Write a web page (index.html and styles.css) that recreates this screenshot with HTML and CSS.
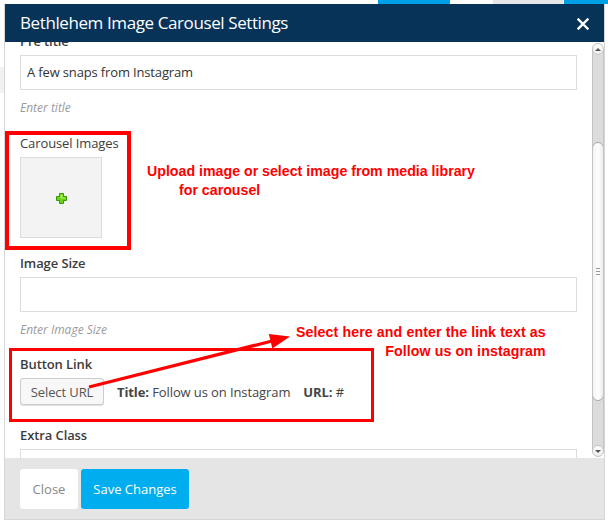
FILE: index.html
```html
<!DOCTYPE html>
<html>
<head>
<meta charset="utf-8">
<link rel="stylesheet" href="styles.css">
</head>
<body>
<div class="backdrop">
  <span class="bg-bar bg-blue1"></span>
  <span class="bg-bar bg-gray1"></span>
  <span class="bg-bar bg-blue2"></span>
  <span class="bg-side"></span>
</div>
<div class="modal">
  <div class="modal-header">
    <h1 class="modal-title">Bethlehem Image Carousel Settings</h1>
    <button class="modal-close" aria-label="Close">
      <svg width="12" height="12" viewBox="0 0 12 12"><path d="M1.5 1.5 L10.5 10.5 M10.5 1.5 L1.5 10.5" stroke="#fff" stroke-width="2.4" stroke-linecap="square"/></svg>
    </button>
  </div>
  <div class="modal-body">
    <div class="content">
      <div class="field">
        <label class="label">Pre title</label>
        <div class="input">A few snaps from Instagram</div>
        <div class="hint">Enter title</div>
      </div>
      <div class="field field-gap17 anchor">
        <label class="label label-normal">Carousel Images</label>
        <div class="img-box">
          <svg width="11" height="11" viewBox="0 0 11 11"><path d="M3.5 0.5 H7.5 V3.5 H10.5 V7.5 H7.5 V10.5 H3.5 V7.5 H0.5 V3.5 H3.5 Z" fill="#6fd11a" stroke="#2f9a06" stroke-width="1"/><path d="M4.5 1.5 H6.5 V4.5 H9.5 V5.5 H4.5 Z" fill="#a8ec5a"/></svg>
        </div>
        <span class="anno-box anno-box1"></span>
      </div>
      <div class="field field-gap16">
        <label class="label">Image Size</label>
        <div class="input"></div>
        <div class="hint">Enter Image Size</div>
      </div>
      <div class="field field-gap16 anchor">
        <label class="label">Button Link</label>
        <div class="link-row">
          <button class="btn-select">Select URL</button>
          <span class="meta"><b>Title:</b> Follow us on Instagram</span>
          <span class="meta"><b>URL:</b> #</span>
        </div>
        <span class="anno-box anno-box2"></span>
      </div>
      <div class="field field-gap21">
        <label class="label">Extra Class</label>
        <div class="input"></div>
      </div>
      <div class="anno-text anno-text1">
        <div>Upload image or select image from media library</div>
        <div class="indent">for carousel</div>
      </div>
      <div class="anno-text anno-text2">
        <div>Select here and enter the link text as</div>
        <div>Follow us on instagram</div>
      </div>
      <svg class="anno-arrow" width="608" height="523" viewBox="0 0 608 523">
        <line x1="89" y1="387" x2="274" y2="340.5" stroke="#ff0000" stroke-width="3.2"/>
        <polygon points="290,336.5 268.8,334 272.4,348.5" fill="#ff0000"/>
      </svg>
    </div>
    <div class="scrollbar">
      <div class="sb-btn sb-up"><span class="tri-up"></span></div>
      <div class="sb-track sb-track-top"></div>
      <div class="sb-thumb"><span class="grip"></span></div>
      <div class="sb-track sb-track-bottom"></div>
      <div class="sb-btn sb-down"><span class="tri-down"></span></div>
    </div>
  </div>
  <div class="modal-footer">
    <button class="btn btn-close">Close</button>
    <button class="btn btn-save">Save Changes</button>
  </div>
</div>
</body>
</html>
```

FILE: styles.css
```css
* { box-sizing: border-box; }
html, body { margin: 0; padding: 0; }
body {
  width: 608px;
  height: 523px;
  overflow: hidden;
  background: #fff;
  font-family: "Open Sans", "Noto Sans", sans-serif;
  color: #333;
  position: relative;
}
.backdrop { position: absolute; inset: 0; z-index: 0; }
.bg-bar { position: absolute; top: 0; height: 4px; }
.bg-blue1 { left: 378px; width: 72px; background: #00a0e6; }
.bg-gray1 { left: 493px; width: 70px; background: #e6e6e6; }
.bg-blue2 { left: 564px; width: 44px; background: #00a0e6; }
.bg-side { position: absolute; left: 0; top: 67px; width: 4px; height: 26px; background: #f1f1f1; }

.modal {
  position: relative;
  z-index: 1;
  margin: 4px 0 0 4px;
  width: 601px;
  border: 1px solid #d6d6d6;
  border-top: 0;
  background: #fff;
  display: flex;
  flex-direction: column;
}
.modal-header {
  height: 38px;
  background: #073358;
  display: flex;
  align-items: center;
  justify-content: space-between;
  padding: 0 15px 0 15px;
  position: relative;
  z-index: 2;
}
.modal-title {
  margin: 0;
  font-size: 17px;
  font-weight: 400;
  color: #fff;
  line-height: 24px;
  letter-spacing: -0.4px;
}
.modal-close {
  border: 0;
  background: transparent;
  padding: 0;
  width: 12px;
  height: 12px;
  display: flex;
  margin-top: 1px;
}
.modal-body {
  height: 416px;
  display: flex;
  overflow: hidden;
}
.content {
  flex: 1;
  padding: 0 15px;
  margin-top: -10px;
  position: relative;
}
.field { position: relative; }
.field-gap17 { margin-top: 17px; }
.field-gap16 { margin-top: 16px; }
.field-gap21 { margin-top: 21px; }
.label {
  display: block;
  font-size: 13px;
  line-height: 18px;
  font-weight: 600;
  color: #3c3c3c;
  margin-bottom: 5px;
  letter-spacing: -0.1px;
}
.label-normal { font-weight: 400; }
.input {
  height: 35px;
  border: 1px solid #dcdcdc;
  font-size: 13px;
  line-height: 33px;
  padding: 0 6px;
  color: #333;
  background: #fff;
  letter-spacing: -0.15px;
}
.hint {
  margin-top: 9px;
  font-size: 12px;
  line-height: 18px;
  font-style: italic;
  color: #9a9a9a;
}
.img-box {
  width: 82px;
  height: 81px;
  background: #f3f3f3;
  border: 1px solid #dcdcdc;
  display: flex;
  align-items: center;
  justify-content: center;
}
.img-box svg { display: block; margin-top: 1px; }
.link-row {
  display: flex;
  align-items: center;
  gap: 13px;
}
.btn-select {
  height: 27px;
  width: 84px;
  padding: 0;
  font-family: inherit;
  font-size: 13px;
  color: #555;
  background: #f7f7f7;
  border: 1px solid #cccccc;
  border-radius: 3px;
  box-shadow: 0 1px 0 #e0e0e0;
  letter-spacing: -0.1px;
}
.meta { font-size: 13px; color: #444; letter-spacing: -0.1px; }
.meta b { font-weight: 700; color: #444; }

.anno-box {
  position: absolute;
  border: 4px solid #ff0000;
  pointer-events: none;
}
.anno-box1 { left: -15px; top: -3px; width: 126px; height: 119px; }
.anno-box2 { left: -11px; top: -7px; width: 365px; height: 74px; border-width: 3.5px; }

.anno-text {
  position: absolute;
  font-family: "Liberation Sans", Arial, sans-serif;
  font-weight: 700;
  font-size: 14.2px;
  line-height: 19px;
  color: #ff0000;
  white-space: nowrap;
}
.anno-text1 { left: 142px; top: 130px; }
.anno-text1 .indent { padding-left: 32px; }
.anno-text2 { left: 291px; top: 291px; text-align: right; letter-spacing: 0.1px; }
.anno-arrow { position: absolute; left: -5px; top: -32px; pointer-events: none; }

.scrollbar {
  width: 12px;
  margin: 1px 0 1px 0;
  display: flex;
  flex-direction: column;
  background: #dcdcdc;
  border: 1px solid #c4c4c4;
  border-radius: 6px;
  overflow: hidden;
}
.sb-btn {
  height: 12px;
  background: linear-gradient(#fcfcfc, #eeeeee);
  border-radius: 6px;
  display: flex;
  align-items: center;
  justify-content: center;
  border: 1px solid #c8c8c8;
  margin: -1px;
}
.tri-up { width: 0; height: 0; border-left: 3px solid transparent; border-right: 3px solid transparent; border-bottom: 3px solid #555; }
.tri-down { width: 0; height: 0; border-left: 3px solid transparent; border-right: 3px solid transparent; border-top: 3px solid #555; }
.sb-track-top { height: 88px; }
.sb-track-bottom { flex: 1; }
.sb-thumb {
  height: 259px;
  margin: 0 -1px;
  background: linear-gradient(90deg, #f2f2f2, #ffffff 50%, #ececec);
  border: 1px solid #a9a9a9;
  border-radius: 6px;
  display: flex;
  align-items: center;
  justify-content: center;
}
.grip {
  width: 4px;
  height: 7px;
  border-top: 1px solid #999;
  border-bottom: 1px solid #999;
  position: relative;
}
.grip::after { content: ""; position: absolute; left: 0; right: 0; top: 2px; border-top: 1px solid #999; }

.modal-footer {
  height: 61px;
  background: #e5e5e5;
  display: flex;
  align-items: flex-start;
  gap: 3px;
  padding: 11px 15px 0 15px;
}
.btn {
  height: 40px;
  border: 0;
  border-radius: 3px;
  font-family: inherit;
  font-size: 13px;
  padding: 0;
}
.btn-close { width: 58px; background: #fff; color: #888; }
.btn-save { width: 108px; background: #00adef; color: #fff; }
```
